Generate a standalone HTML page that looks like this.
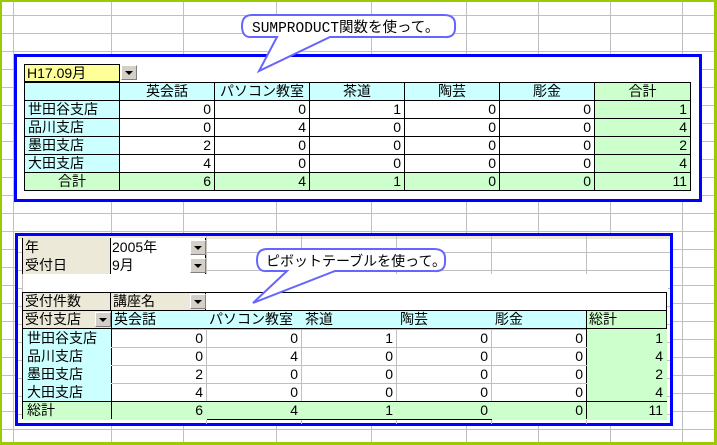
<!DOCTYPE html>
<html><head><meta charset="utf-8"><style>
*{margin:0;padding:0;box-sizing:border-box}
body{width:717px;height:445px;overflow:hidden;position:relative;background:#fff;font-family:"Liberation Sans","Noto Sans CJK JP",sans-serif;font-size:14px;color:#000}
.frame{position:absolute;left:0;top:0;width:717px;height:445px;border:2px solid #99cc00;border-right-width:3px;border-bottom-width:3px}
.grid{position:absolute;left:2px;top:2px;width:712px;height:440px;
background-image:repeating-linear-gradient(to bottom,transparent 0,transparent 13px,#c0c0c0 13px,#c0c0c0 14px,transparent 14px,transparent 18px);}
.v{position:absolute;top:2px;width:1px;height:440px;background:#c0c0c0}
.box{position:absolute;border:3px solid #0000ff;background:#fff}
.a{position:absolute;line-height:18px;white-space:nowrap;overflow:hidden}
table{position:absolute;border-collapse:collapse;table-layout:fixed}
td{height:18px;line-height:17px;padding:0 3px;white-space:nowrap;overflow:hidden;font-size:14px}
.t td{border:1px solid #000}
.c{background:#ccffff}.g{background:#ccffcc}.r{text-align:right}.m{text-align:center}
.btn{position:absolute;width:16px;height:15px;background:#d4d0c8;border:1px solid;border-color:#fff #808080 #808080 #fff}
.btn:after{content:"";position:absolute;left:3px;top:5px;border-left:4px solid transparent;border-right:4px solid transparent;border-top:4px solid #000}
.p td{border:1px solid #c0c0c0}
.bg{background:#ece9d8}
</style></head><body>
<div class="frame"></div>
<div class="grid"></div>
<div class="v" style="left:13px"></div><div class="v" style="left:111px"></div><div class="v" style="left:183px"></div><div class="v" style="left:276px"></div><div class="v" style="left:371px"></div><div class="v" style="left:466px"></div><div class="v" style="left:538px"></div><div class="v" style="left:610px"></div><div class="v" style="left:682px"></div>

<div class="box" style="left:14px;top:54px;width:688px;height:148px"></div>
<div class="a" style="left:24px;top:64px;width:96px;height:18px;background:#ffff99;border:1px solid #000;padding-left:2px;line-height:16px">H17.09月</div>
<div class="btn" style="left:121px;top:65px"></div>
<table class="t" style="left:24px;top:82px;width:666px">
<colgroup><col style="width:95px"><col style="width:95px"><col style="width:95px"><col style="width:95px"><col style="width:95px"><col style="width:95px"><col style="width:96px"></colgroup>
<tr><td class="c"></td><td class="c m">英会話</td><td class="c m">パソコン教室</td><td class="c m">茶道</td><td class="c m">陶芸</td><td class="c m">彫金</td><td class="g m">合計</td></tr>
<tr><td class="c">世田谷支店</td><td class="r">0</td><td class="r">0</td><td class="r">1</td><td class="r">0</td><td class="r">0</td><td class="g r">1</td></tr>
<tr><td class="c">品川支店</td><td class="r">0</td><td class="r">4</td><td class="r">0</td><td class="r">0</td><td class="r">0</td><td class="g r">4</td></tr>
<tr><td class="c">墨田支店</td><td class="r">2</td><td class="r">0</td><td class="r">0</td><td class="r">0</td><td class="r">0</td><td class="g r">2</td></tr>
<tr><td class="c">大田支店</td><td class="r">4</td><td class="r">0</td><td class="r">0</td><td class="r">0</td><td class="r">0</td><td class="g r">4</td></tr>
<tr><td class="g m">合計</td><td class="g r">6</td><td class="g r">4</td><td class="g r">1</td><td class="g r">0</td><td class="g r">0</td><td class="g r">11</td></tr>
</table>

<div class="box" style="left:15px;top:233px;width:658px;height:193px;background:#fff;
background-image:repeating-linear-gradient(to bottom,transparent 0,transparent 16px,#c0c0c0 16px,#c0c0c0 17px,transparent 17px,transparent 18px)"></div>
<div style="position:absolute;left:18px;top:236px;width:652px;height:3px;background:#ece9d8"></div>
<div class="v" style="left:206px;top:236px;height:188px"></div><div class="v" style="left:301px;top:236px;height:188px"></div><div class="v" style="left:396px;top:236px;height:188px"></div><div class="v" style="left:491px;top:236px;height:188px"></div><div class="v" style="left:586px;top:236px;height:188px"></div>

<div class="a bg" style="left:22px;top:238px;width:89px;border:1px solid #000;border-width:0 1px 1px 1px;padding-left:2px">年</div>
<div class="a" style="left:111px;top:238px;width:95px;border-bottom:1px solid #000;border-right:1px solid #000;background:#fff;padding-left:1px">2005年</div>
<div class="btn" style="left:190px;top:240px"></div>
<div class="a bg" style="left:22px;top:256px;width:89px;border:1px solid #000;border-width:0 1px 1px 1px;padding-left:2px">受付日</div>
<div class="a" style="left:111px;top:256px;width:95px;border-bottom:1px solid #000;border-right:1px solid #000;background:#fff;padding-left:1px">9月</div>
<div class="btn" style="left:190px;top:258px"></div>
<div style="position:absolute;left:22px;top:274px;width:646px;height:18px;background:#fff;border-left:1px solid #c0c0c0"></div>

<div style="position:absolute;left:22px;top:292px;width:645px;height:127px;border:1px solid #000;background:#fff"></div>
<div class="a bg" style="left:23px;top:293px;width:88px;border-right:1px solid #000;padding-left:2px;height:17px;line-height:17px">受付件数</div>
<div class="a bg" style="left:111px;top:293px;width:95px;border-right:1px solid #000;padding-left:2px;height:17px;line-height:17px">講座名</div>
<div class="btn" style="left:190px;top:294px"></div>
<div style="position:absolute;left:23px;top:310px;width:643px;height:1px;background:#000"></div>
<div class="a bg" style="left:23px;top:311px;width:88px;padding-left:2px;height:17px;line-height:17px">受付支店</div>
<div class="btn" style="left:95px;top:312px"></div>
<div class="a c" style="left:111px;top:311px;width:475px;height:17px;line-height:17px;border-left:1px solid #000"></div>
<div class="a" style="left:114px;top:311px;line-height:17px">英会話</div>
<div class="a" style="left:209px;top:311px;line-height:17px">パソコン教室</div>
<div class="a" style="left:305px;top:311px;line-height:17px">茶道</div>
<div class="a" style="left:400px;top:311px;line-height:17px">陶芸</div>
<div class="a" style="left:495px;top:311px;line-height:17px">彫金</div>
<div class="a g" style="left:586px;top:311px;width:80px;height:17px;line-height:17px;border-left:1px solid #000;padding-left:2px">総計</div>
<div style="position:absolute;left:23px;top:328px;width:643px;height:1px;background:#000"></div>

<table class="p" style="left:23px;top:329px;width:643px">
<colgroup><col style="width:88px"><col style="width:95px"><col style="width:95px"><col style="width:95px"><col style="width:95px"><col style="width:95px"><col style="width:80px"></colgroup>
<tr><td class="c" style="border-color:#ccffff #000 #ccffff #ccffff">世田谷支店</td><td class="r">0</td><td class="r">0</td><td class="r">1</td><td class="r">0</td><td class="r" style="border-right-color:#000">0</td><td class="g r" style="border-color:#ccffcc">1</td></tr>
<tr><td class="c" style="border-color:#ccffff #000 #ccffff #ccffff">品川支店</td><td class="r">0</td><td class="r">4</td><td class="r">0</td><td class="r">0</td><td class="r" style="border-right-color:#000">0</td><td class="g r" style="border-color:#ccffcc">4</td></tr>
<tr><td class="c" style="border-color:#ccffff #000 #ccffff #ccffff">墨田支店</td><td class="r">2</td><td class="r">0</td><td class="r">0</td><td class="r">0</td><td class="r" style="border-right-color:#000">0</td><td class="g r" style="border-color:#ccffcc">2</td></tr>
<tr><td class="c" style="border-color:#ccffff #000 #000 #ccffff">大田支店</td><td class="r" style="border-bottom-color:#000">4</td><td class="r" style="border-bottom-color:#000">0</td><td class="r" style="border-bottom-color:#000">0</td><td class="r" style="border-bottom-color:#000">0</td><td class="r" style="border-color:#c0c0c0 #000 #000 #c0c0c0">0</td><td class="g r" style="border-color:#ccffcc #ccffcc #000 #000">4</td></tr>
<tr><td class="g" style="border-color:#000 #000 #ccffcc #ccffcc">総計</td><td class="g r" style="border-color:#000 #ccffcc #ccffcc #000">6</td><td class="g r" style="border-color:#000 #ccffcc">4</td><td class="g r" style="border-color:#000 #ccffcc">1</td><td class="g r" style="border-color:#000 #ccffcc">0</td><td class="g r" style="border-color:#000 #000 #ccffcc #ccffcc">0</td><td class="g r" style="border-color:#000 #ccffcc #ccffcc #000">11</td></tr>
</table>

<svg width="717" height="445" style="position:absolute;left:0;top:0">
<path d="M252,15 L444,15 Q456,15 455,26 Q456,38 444,37 L330,37 L259,71 L277,37 L252,37 Q242,38 242,26 Q242,15 252,15 Z" fill="#fff" stroke="#6666ff" stroke-width="2"/>
<text x="252" y="32" font-family="Liberation Mono,Noto Sans CJK JP,monospace" font-size="14.5">SUMPRODUCT関数を使って。</text>
<path d="M267,249 L434,249 Q446,249 445,260 Q446,272 434,271 L335,271 L253,303 L287,271 L267,271 Q257,272 257,260 Q257,249 267,249 Z" fill="#fff" stroke="#6666ff" stroke-width="2"/>
<text x="266" y="266" font-family="Liberation Sans,Noto Sans CJK JP,sans-serif" font-size="14">ピボットテーブルを使って。</text>
</svg>
</body></html>
